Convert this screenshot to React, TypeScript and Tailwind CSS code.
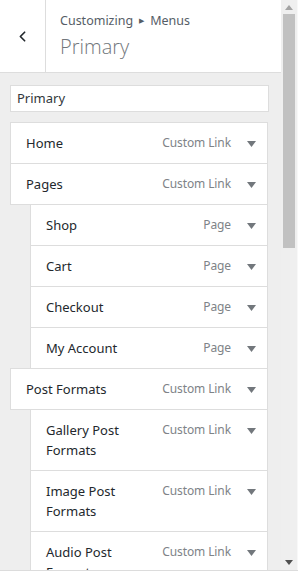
import { ChevronLeft } from 'lucide-react';

interface MenuItem {
  title: string;
  type: string;
  depth: number;
}

const items: MenuItem[] = [
  { title: 'Home', type: 'Custom Link', depth: 0 },
  { title: 'Pages', type: 'Custom Link', depth: 0 },
  { title: 'Shop', type: 'Page', depth: 1 },
  { title: 'Cart', type: 'Page', depth: 1 },
  { title: 'Checkout', type: 'Page', depth: 1 },
  { title: 'My Account', type: 'Page', depth: 1 },
  { title: 'Post Formats', type: 'Custom Link', depth: 0 },
  { title: 'Gallery Post Formats', type: 'Custom Link', depth: 1 },
  { title: 'Image Post Formats', type: 'Custom Link', depth: 1 },
  { title: 'Audio Post Formats', type: 'Custom Link', depth: 1 },
];

function Caret() {
  return (
    <svg width="9" height="6" viewBox="0 0 9 6" className="flex-shrink-0 mt-[2px]">
      <path d="M0 0h9L4.5 6z" fill="#72777c" />
    </svg>
  );
}

function MenuRow({ item, first }: { item: MenuItem; first: boolean }) {
  return (
    <div
      className={`flex items-start bg-white border border-[#dddddd] py-[10px] pr-[11px] pl-[15px] ${
        item.depth ? 'ml-[20px]' : ''
      } ${first ? '' : '-mt-px'}`}
    >
      <div className="flex-1 min-w-0 pr-[30px] text-[13px] leading-[20px] text-[#23282d]">{item.title}</div>
      <div className="flex items-center gap-[16px] h-[20px]">
        <span className="text-[12px] tracking-[-0.1px] text-[#7e8387] whitespace-nowrap">{item.type}</span>
        <Caret />
      </div>
    </div>
  );
}

export default function App() {
  return (
    <div
      className="flex h-[571px] w-[298px] overflow-hidden bg-[#eeeeee] border-b border-[#dcdcdc]"
      style={{ fontFamily: '"Noto Sans", "Open Sans", sans-serif' }}
    >
      <div className="flex-1 min-w-0 flex flex-col">
        {/* Header */}
        <div className="flex h-[73px] bg-white border-b border-[#dddddd] flex-shrink-0">
          <div className="w-[46px] border-r border-[#dddddd] flex items-center justify-center">
            <ChevronLeft className="w-[17px] h-[17px] text-[#23282d]" strokeWidth={2.4} />
          </div>
          <div className="pl-[14px] pt-[11px]">
            <div className="flex items-center text-[12.5px] leading-[20px] text-[#555d66]">
              <span>Customizing</span>
              <span className="text-[7px] mx-[6px]">&#9654;</span>
              <span>Menus</span>
            </div>
            <div
              className="text-[20px] leading-[28px] font-light text-[#72777c] mt-[2px]"
              style={{ fontFamily: '"Open Sans", "Noto Sans", sans-serif' }}
            >
              Primary
            </div>
          </div>
        </div>

        {/* Menu name */}
        <div className="pl-[10px] pr-[12px] pt-[12px]">
          <div className="h-[27px] bg-white border border-[#dddddd] flex items-center px-[6px] text-[13px] text-[#32373c]">
            Primary
          </div>
        </div>

        {/* Items */}
        <div className="pl-[10px] pr-[13px] pt-[10px]">
          {items.map((item, i) => (
            <MenuRow key={i} item={item} first={i === 0} />
          ))}
        </div>
      </div>

      {/* Scrollbar */}
      <div className="w-[17px] flex flex-col border-r border-[#f8f8f8] bg-[#efefef]">
        <div className="h-[14px] flex items-center justify-center">
          <svg width="8" height="5" viewBox="0 0 8 5">
            <path d="M0 5h8L4 0z" fill="#a3a3a3" />
          </svg>
        </div>
        <div className="mx-[2px] h-[234px] bg-[#c1c1c1]" />
        <div className="flex-1" />
        <div className="h-[16px] flex items-center justify-center">
          <svg width="8" height="5" viewBox="0 0 8 5">
            <path d="M0 0h8L4 5z" fill="#505050" />
          </svg>
        </div>
      </div>
    </div>
  );
}
